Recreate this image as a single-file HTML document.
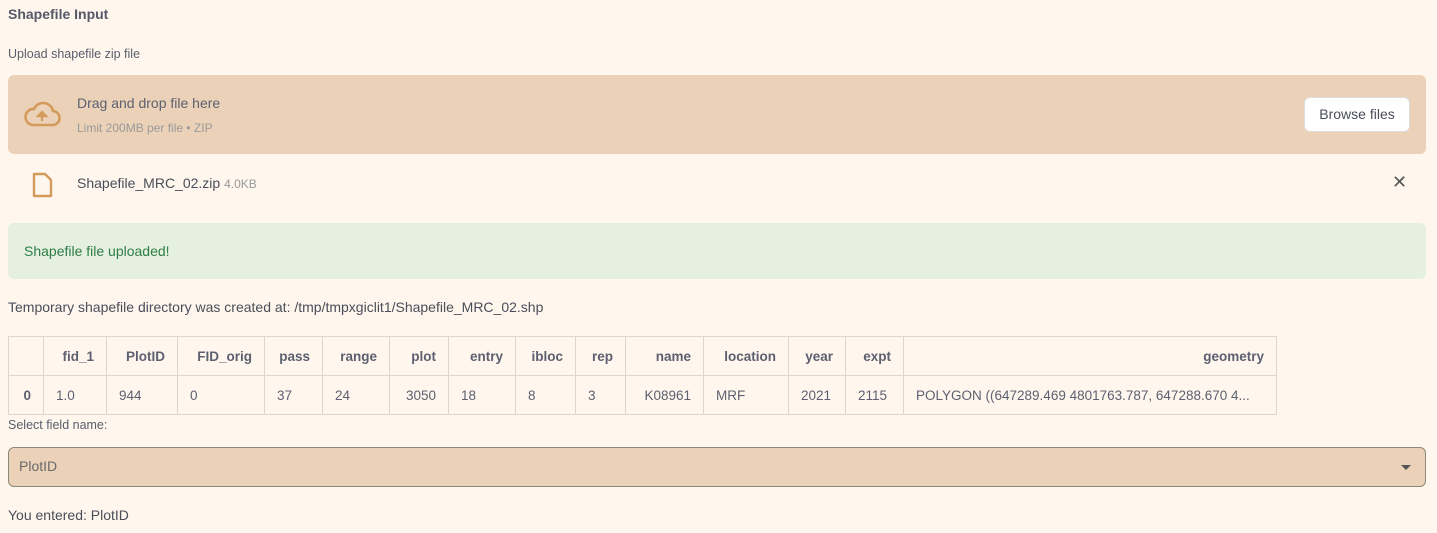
<!DOCTYPE html>
<html><head><style>
body{margin:0;background:#fff7ee;font-family:"Liberation Sans",sans-serif;color:#4a4d5a;width:1437px;height:533px;overflow:hidden;position:relative}
.a{position:absolute}
table{border-collapse:collapse;position:absolute;left:8px;top:336px;font-size:13.5px;table-layout:fixed;width:1268px}
td,th{border:1px solid #e0d5c6;height:38px;padding:0 12px;white-space:nowrap;overflow:hidden}
th{font-weight:bold;color:#5d6070;text-align:right}
td{color:#5d6070}
</style></head><body>
<div class="a" style="left:8px;top:6px;font-weight:bold;font-size:14px;color:#555866">Shapefile Input</div>
<div class="a" style="left:8px;top:47px;font-size:12.5px;color:#5a5d6b">Upload shapefile zip file</div>
<div class="a" style="left:8px;top:75px;width:1418px;height:79px;background:#ebd1b7;border-radius:6px"></div>
<svg class="a" style="left:22px;top:99px" width="40" height="30" viewBox="0 0 40 30"><path d="M11 26h19a7 7 0 0 0 1-14A10 10 0 0 0 12 10a8 8 0 0 0-1 16z" fill="none" stroke="#d49a5a" stroke-width="2.6"/><path d="M20 22v-7M16 17l4-4 4 4z" fill="#d49a5a" stroke="#d49a5a" stroke-width="2.2"/></svg>
<div class="a" style="left:77px;top:95px;font-size:14px;color:#5d6070">Drag and drop file here</div>
<div class="a" style="left:77px;top:121px;font-size:12px;color:#9a9a9a">Limit 200MB per file • ZIP</div>
<div class="a" style="left:1304px;top:97px;width:104px;height:33px;background:#fff;border:1px solid #ddd;border-radius:6px;font-size:14px;line-height:33px;text-align:center;color:#4a4d5a">Browse files</div>
<svg class="a" style="left:32px;top:172px" width="22" height="26" viewBox="0 0 22 26"><path d="M2 2h11l6 6v16H2z" fill="none" stroke="#d49a5a" stroke-width="2.4" stroke-linejoin="round"/></svg>
<div class="a" style="left:77px;top:175px;font-size:14px;color:#4a4d5a">Shapefile_MRC_02.zip <span style="font-size:12px;color:#999">4.0KB</span></div>
<div class="a" style="left:1392px;top:172px;font-size:18px;color:#555">✕</div>
<div class="a" style="left:8px;top:223px;width:1418px;height:56px;background:#e5f0e1;border-radius:6px"></div>
<div class="a" style="left:24px;top:243px;font-size:14px;color:#2e7d46">Shapefile file uploaded!</div>
<div class="a" style="left:8px;top:299px;font-size:14px;color:#4a4d5a">Temporary shapefile directory was created at: /tmp/tmpxgiclit1/Shapefile_MRC_02.shp</div>
<table>
<colgroup><col style="width:35px"><col style="width:63px"><col style="width:71px"><col style="width:87px"><col style="width:58px"><col style="width:67px"><col style="width:59px"><col style="width:67px"><col style="width:60px"><col style="width:50px"><col style="width:78px"><col style="width:85px"><col style="width:57px"><col style="width:58px"><col style="width:373px"></colgroup>
<tr><th></th><th>fid_1</th><th>PlotID</th><th>FID_orig</th><th>pass</th><th>range</th><th>plot</th><th>entry</th><th>ibloc</th><th>rep</th><th>name</th><th>location</th><th>year</th><th>expt</th><th>geometry</th></tr>
<tr><th>0</th><td>1.0</td><td>944</td><td>0</td><td>37</td><td>24</td><td style="text-align:right">3050</td><td>18</td><td>8</td><td>3</td><td style="text-align:right">K08961</td><td>MRF</td><td>2021</td><td>2115</td><td>POLYGON ((647289.469 4801763.787, 647288.670 4...</td></tr>
</table>
<div class="a" style="left:8px;top:418px;font-size:12.5px;color:#5a5d6b">Select field name:</div>
<div class="a" style="left:8px;top:447px;width:1416px;height:38px;background:#ebd1b7;border:1px solid #8a8a7a;border-radius:6px"></div>
<div class="a" style="left:19px;top:458px;font-size:14px;color:#6a6a6a">PlotID</div>
<div class="a" style="left:1401px;top:465px;width:0;height:0;border-left:5px solid transparent;border-right:5px solid transparent;border-top:5px solid #555"></div>
<div class="a" style="left:8px;top:507px;font-size:14px;color:#4a4d5a">You entered: PlotID</div>
</body></html>
